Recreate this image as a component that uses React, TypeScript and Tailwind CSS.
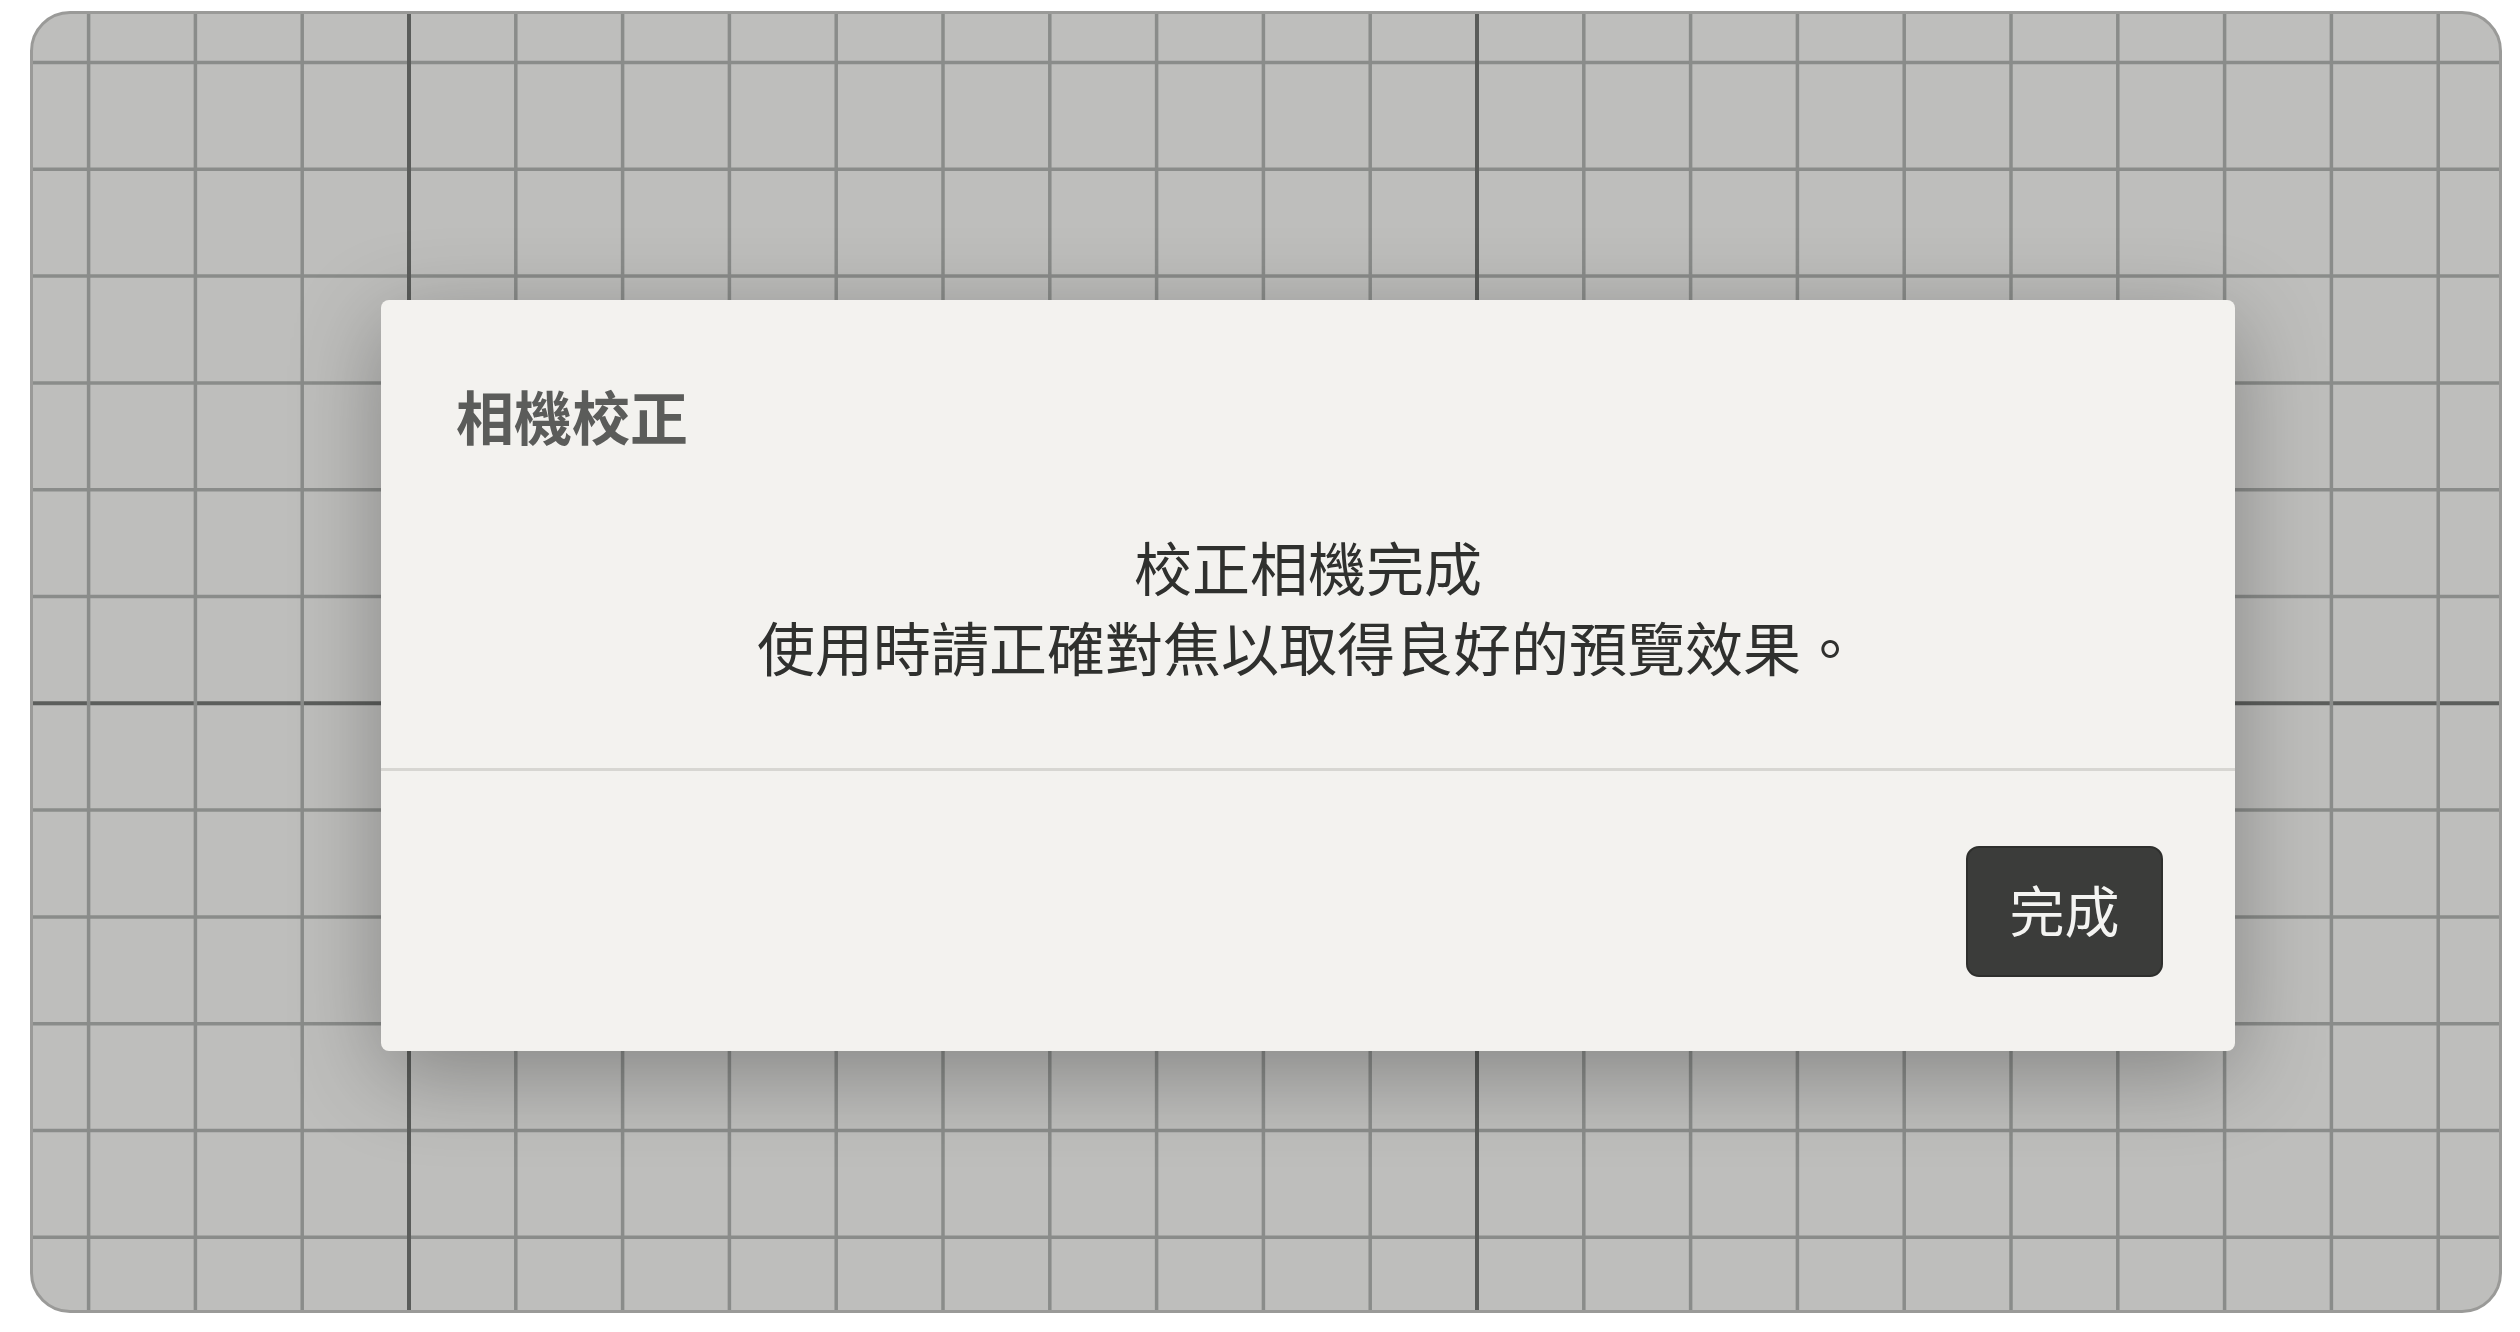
const GRID = 106.8;
const INNER_W = 2466;
const INNER_H = 1296;

function GridCanvas() {
  const cols: number[] = [];
  for (let i = 0; 55.6 + i * GRID < INNER_W; i++) cols.push(i);
  const rows: number[] = [];
  for (let j = 0; 48.5 + j * GRID < INNER_H; j++) rows.push(j);

  return (
    <svg
      className="absolute inset-0"
      width={INNER_W}
      height={INNER_H}
      viewBox={`0 0 ${INNER_W} ${INNER_H}`}
    >
      {rows.map((j) => {
        const y = 48.5 + j * GRID;
        const major = (j - 6) % 10 === 0;
        return (
          <line
            key={`r${j}`}
            x1={0}
            x2={INNER_W}
            y1={y}
            y2={y}
            stroke={major ? "#5c5e5c" : "#8a8c8a"}
            strokeWidth={major ? 4 : 3.5}
          />
        );
      })}
      {cols.map((i) => {
        const x = 55.6 + i * GRID;
        const major = (i - 3) % 10 === 0;
        return (
          <line
            key={`c${i}`}
            x1={x}
            x2={x}
            y1={0}
            y2={INNER_H}
            stroke={major ? "#5a5c5a" : "#8a8c8a"}
            strokeWidth={major ? 4 : 3.5}
          />
        );
      })}
    </svg>
  );
}

export default function App() {
  return (
    <div className="h-[1332px] w-[2520px] bg-white pl-[30px] pt-[11px] font-['Noto_Sans_CJK_TC',sans-serif]">
      <div className="relative h-[1302px] w-[2472px] overflow-hidden rounded-[40px] border-[3px] border-[#9a9a98] bg-[#bebebc] pl-[348px] pt-[286px]">
        <GridCanvas />

        <div className="relative flex h-[751px] w-[1854px] flex-col rounded-[8px] bg-[#f3f2ef] shadow-[0_22px_90px_rgba(0,0,0,0.3)]">
          <div className="px-[75px] pb-[82px] pt-[75px]">
            <h2 className="text-[58px] font-bold leading-[80px] text-[#5b5c5a]">
              相機校正
            </h2>
            <div className="mt-[71px] text-center text-[58px] leading-[80px] text-[#2f302e]">
              <p>校正相機完成</p>
              <p>使用時請正確對焦以取得良好的預覽效果。</p>
            </div>
          </div>

          <div className="h-[3px] bg-[#d7d6d2]" />

          <div className="flex flex-1 items-center justify-end pr-[72px]">
            <button className="flex h-[131px] w-[197px] items-center justify-center rounded-[13px] border-2 border-[#2e2f2d] bg-[#3b3c3a] pb-[6px] text-[55px] text-[#f4f4f2]">
              完成
            </button>
          </div>
        </div>
      </div>
    </div>
  );
}
